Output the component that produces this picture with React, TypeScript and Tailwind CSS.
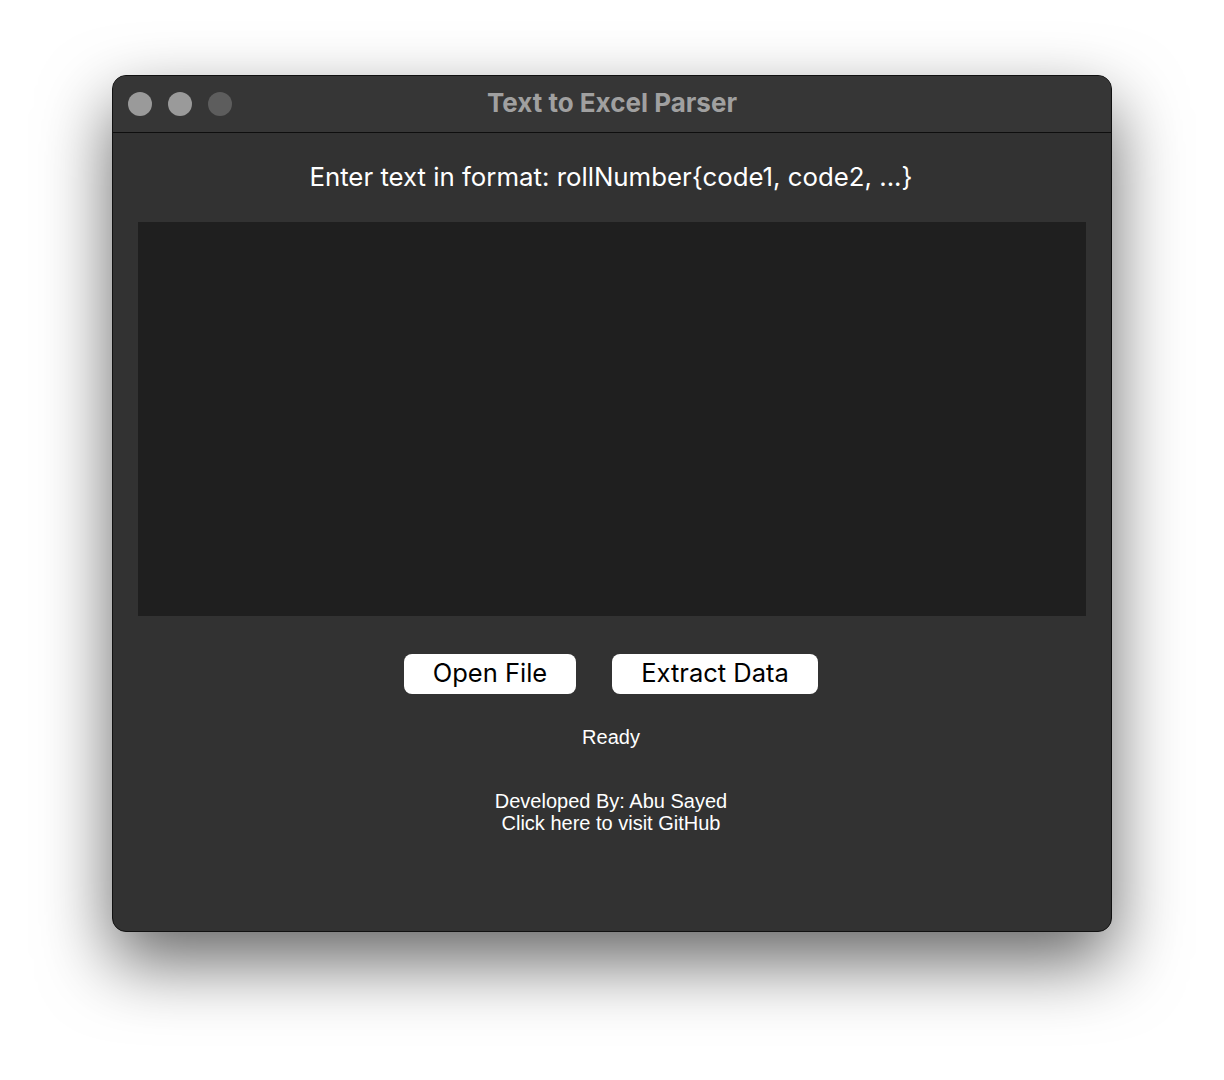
import React from "react";

/**
 * Traffic light dots of the window title bar
 */
function TrafficLights() {
  return (
    <div className="absolute left-[15px] top-[16px] flex gap-[16px]">
      <span className="block h-[24px] w-[24px] rounded-full bg-[#9a9a9a]"></span>
      <span className="block h-[24px] w-[24px] rounded-full bg-[#9a9a9a]"></span>
      <span className="block h-[24px] w-[24px] rounded-full bg-[#5d5d5d]"></span>
    </div>
  );
}

export default function App() {
  return (
    <div className="w-[1224px] h-[1080px] bg-white pl-[112px] pt-[75px]">
      {/* Window */}
      <div className="w-[1000px] h-[857px] rounded-[14px] border border-[#111] bg-[#323232] shadow-[0_30px_70px_rgba(0,0,0,0.6)] overflow-hidden flex flex-col">
        {/* Title bar */}
        <div className="relative h-[57px] shrink-0 border-b border-[#0e0e0e] bg-[#363636] flex items-center justify-center pb-[4px]">
          <TrafficLights />
          <span className="font-['Inter',sans-serif] font-bold text-[26px] text-[#a0a0a0]">
            Text to Excel Parser
          </span>
        </div>

        {/* Content */}
        <div className="flex flex-col items-center pt-[28px] pr-[2px]">
          <p className="font-['Inter',sans-serif] text-[25.8px] leading-[32px] text-white">
            Enter text in format: rollNumber{"{"}code1, code2, ...{"}"}
          </p>
          <textarea className="mt-[29px] ml-[2px] w-[948px] h-[394px] bg-[#1f1f1f] outline-none resize-none"></textarea>
          <div className="mt-[38px] flex gap-[36px]">
            <button className="w-[172px] h-[40px] rounded-[8px] bg-white text-black font-['Inter',sans-serif] text-[25.5px] leading-[30px] pb-[2px]">
              Open File
            </button>
            <button className="w-[206px] h-[40px] rounded-[8px] bg-white text-black font-['Inter',sans-serif] text-[25.5px] leading-[30px] pb-[2px]">
              Extract Data
            </button>
          </div>
          <p className="mt-[32px] font-['Liberation_Sans',Arial,sans-serif] text-[20px] leading-[23px] text-white">
            Ready
          </p>
          <div className="mt-[41px] text-center font-['Liberation_Sans',Arial,sans-serif] text-[20px] leading-[22px] text-white">
            <p>Developed By: Abu Sayed</p>
            <p>Click here to visit GitHub</p>
          </div>
        </div>
      </div>
    </div>
  );
}
